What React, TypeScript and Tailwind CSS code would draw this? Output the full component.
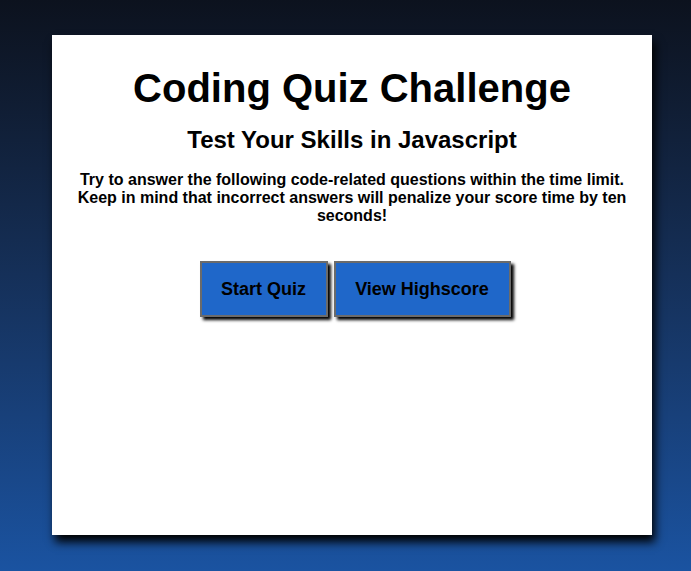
import React from "react";

export default function App() {
  return (
    <div
      className="w-[691px] h-[571px] overflow-hidden bg-gradient-to-b from-[#0c121e] to-[#1a53a1] pt-[35px] [font-family:'Liberation_Sans',Arial,sans-serif]"
    >
      <div className="ml-[52px] w-[600px] h-[500px] bg-white shadow-[3px_7px_9px_rgba(0,0,0,1)] flex flex-col items-center text-black text-center">
        <h1 className="mt-[30px] text-[40px] leading-[46px] font-bold">Coding Quiz Challenge</h1>
        <h2 className="mt-[15px] text-[24px] leading-[28px] font-bold">Test Your Skills in Javascript</h2>
        <p className="mt-[17px] px-[24px] text-[16px] leading-[18px] font-bold">
          Try to answer the following code-related questions within the time limit. Keep in mind that incorrect answers will penalize your score time by ten seconds!
        </p>
        <div className="mt-[36px] pl-[6px] flex gap-[6px]">
          <button className="w-[128px] h-[56px] bg-[#1f67c9] border-2 border-[#6b6b6b] shadow-[3px_3px_3px_#000] text-[18px] font-bold text-black">
            Start Quiz
          </button>
          <button className="w-[177px] h-[56px] bg-[#1f67c9] border-2 border-[#6b6b6b] shadow-[3px_3px_3px_#000] text-[18px] font-bold text-black">
            View Highscore
          </button>
        </div>
      </div>
    </div>
  );
}
